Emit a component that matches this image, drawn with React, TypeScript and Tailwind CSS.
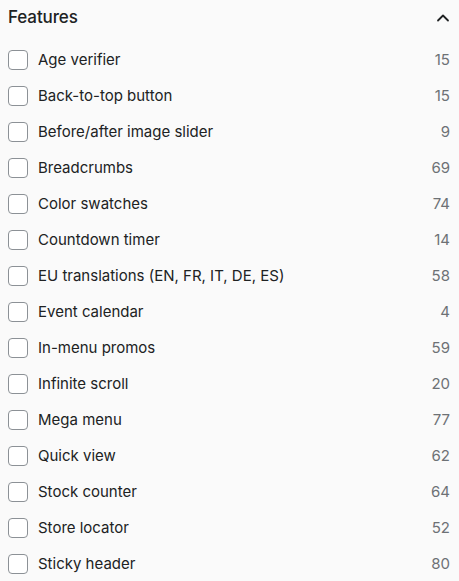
import React from "react";

const items: [string, number][] = [
  ["Age verifier", 15],
  ["Back-to-top button", 15],
  ["Before/after image slider", 9],
  ["Breadcrumbs", 69],
  ["Color swatches", 74],
  ["Countdown timer", 14],
  ["EU translations (EN, FR, IT, DE, ES)", 58],
  ["Event calendar", 4],
  ["In-menu promos", 59],
  ["Infinite scroll", 20],
  ["Mega menu", 77],
  ["Quick view", 62],
  ["Stock counter", 64],
  ["Store locator", 52],
  ["Sticky header", 80],
];

export default function App() {
  return (
    <div
      className="w-[459px] h-[581px] bg-[#fafafa] text-[#202223] overflow-hidden"
      style={{ fontFamily: "Inter, 'Liberation Sans', sans-serif" }}
    >
      <div className="flex items-center justify-between pl-2 pr-[8px] pt-[5px] h-[30px]">
        <span className="text-[17px] font-medium tracking-[-0.1px]">Features</span>
        <svg width="14" height="10" viewBox="0 0 14 10" className="mr-[1px]">
          <path d="M2 7.5 L7 2.5 L12 7.5" fill="none" stroke="#202223" strokeWidth="1.8" strokeLinecap="round" strokeLinejoin="round" />
        </svg>
      </div>
      <div className="flex flex-col pt-[12px]">
        {items.map(([label, n]) => (
          <label key={label} className="flex items-center h-[36px] pl-2 pr-[9px]">
            <span className="w-[20px] h-[20px] rounded-[4px] border border-[#8c9196] bg-white shrink-0" />
            <span className="ml-[10px] text-[15px] flex-1">{label}</span>
            <span className="text-[15px] text-[#6d7175]">{n}</span>
          </label>
        ))}
      </div>
    </div>
  );
}
